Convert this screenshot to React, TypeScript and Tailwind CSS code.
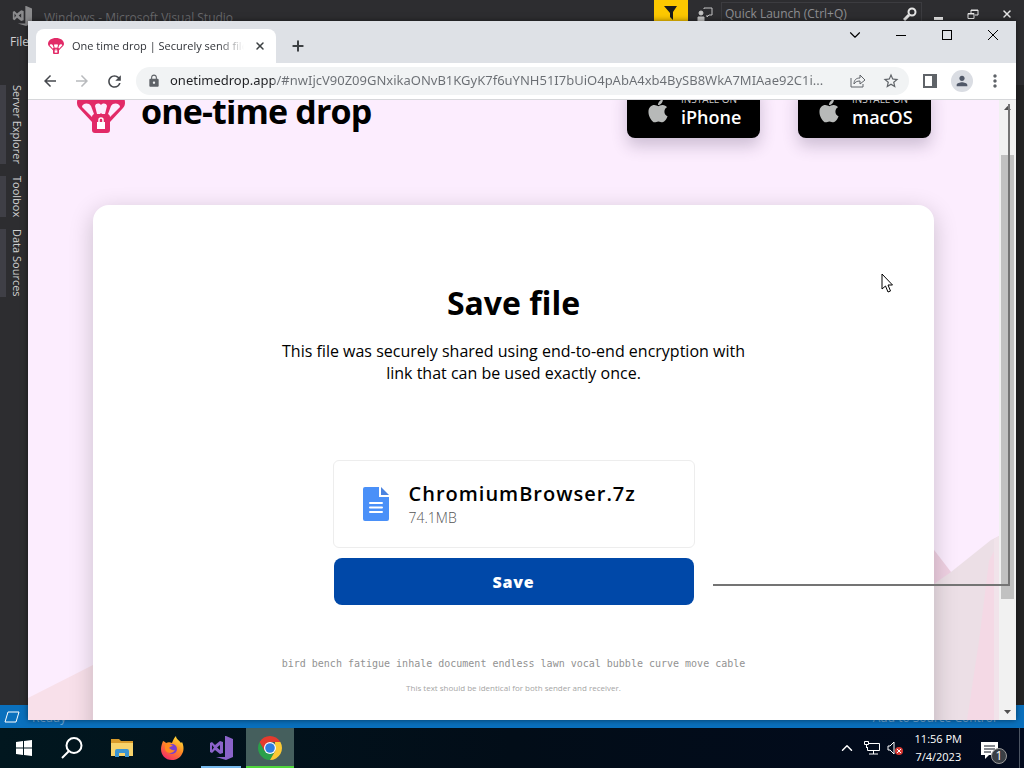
import { FaApple } from "react-icons/fa";
import {
  MdArrowBack,
  MdArrowForward,
  MdLock,
  MdMoreVert,
  MdPerson,
  MdRefresh,
  MdStarBorder,
} from "react-icons/md";
import { ChevronDown, ChevronUp, Plus, X } from "lucide-react";

const toolWindows = ["Server Explorer", "Toolbox", "Data Sources"];

const stores = [
  { id: "ios", name: "iPhone" },
  { id: "mac", name: "macOS" },
];

const file = { name: "ChromiumBrowser.7z", size: "74.1MB" };

const words =
  "bird bench fatigue inhale document endless lawn vocal bubble curve move cable";

const url =
  "onetimedrop.app/#nwIjcV90Z09GNxikaONvB1KGyK7f6uYNH51I7bUiO4pAbA4xb4BySB8WkA7MIAae92C1i...";

function DropLogo({ className }: { className: string }) {
  return (
    <svg viewBox="0 0 48 48" className={className} aria-hidden="true">
      <path
        fill="#e22a67"
        fillRule="evenodd"
        d="M0 18C0 7 11 0 24 0s24 7 24 18c0 2-1 4-2 5L33 37v8a3 3 0 0 1-3 3H18a3 3 0 0 1-3-3v-8L2 23c-1-1-2-3-2-5Z
           M5 22c0-4 7-5 9-1l3 8c-1 1-2 1-2 3Z M18 21c1-3 4-3 6-1 2-2 5-2 6 1l-2 8h-3l-1-1-1 1h-3Z M34 21c2-4 9-3 9 1L33 32c0-2-1-2-2-3Z"
      />
      <path d="M20 37h8v7h-8z" fill="#fff" />
      <path d="M22 37v-2a2 2 0 0 1 4 0v2" fill="none" stroke="#fff" strokeWidth="1.5" />
    </svg>
  );
}

function VisualStudioLogo({ className, color }: { className: string; color: string }) {
  return (
    <svg viewBox="0 0 24 24" className={className} fill={color} aria-hidden="true">
      <path d="M17 0l7 3v18l-7 3L7 21l9 0V0Z" />
      <path
        fillRule="evenodd"
        d="M1 7l2-1 3 3 5-4 3 1v11l-3 1-5-4-3 3-2-1ZM3 9v5l2-2.500ZM11 9l-3 2.500 3 2.500Z"
      />
    </svg>
  );
}

function VisualStudio() {
  return (
    <div className="flex h-full flex-col bg-[#2d2d30] text-[#d0d0d0]">
      <div className="flex h-7 items-center pl-3">
        <VisualStudioLogo className="mt-1 size-5" color="#8b8b8d" />
        <span className="ml-3 pt-2 text-[12px] leading-5 text-[#68686b]">
          Windows - Microsoft Visual Studio
        </span>
        <div className="ml-auto flex h-7 items-center">
          <button aria-label="Notifications" className="flex h-7 w-[34px] justify-center bg-[#fdc800] pt-1">
            <svg viewBox="0 0 14 16" className="h-4 w-[14px]">
              <path d="M0 2h13L9 8v8L6 13V9Z" fill="#1b1b1b" />
            </svg>
          </button>
          <button aria-label="Send feedback" className="flex w-[33px] justify-center">
            <svg viewBox="0 0 16 16" className="size-4" fill="none" stroke="#c4c4c4">
              <path d="M7 3V2h8v7h-3l-2 2V9" />
              <circle cx="4" cy="7" r="2" fill="#c4c4c4" />
              <path d="M1 15v-4h6v4Z" fill="#c4c4c4" />
            </svg>
          </button>
          <label className="flex h-6 w-[201px] items-center border border-[#3c3c40] pr-1 pl-[3px]">
            <input
              aria-label="Quick Launch"
              placeholder="Quick Launch (Ctrl+Q)"
              className="min-w-0 flex-1 bg-transparent text-[12px] outline-none placeholder:text-[#8f8f93]"
            />
            <svg viewBox="0 0 14 14" className="size-[14px]" fill="none" stroke="#e6e6e6" strokeWidth="2">
              <circle cx="9" cy="5" r="3.500" />
              <path d="M6 8l-5 5" strokeWidth="3" />
            </svg>
          </label>
          <div className="flex">
            <button aria-label="Minimize" className="flex w-[34px] justify-center">
              <svg viewBox="0 0 12 12" className="size-3">
                <path d="M1 9h9v3H1z" fill="#e6e6e6" />
              </svg>
            </button>
            <button aria-label="Restore" className="flex w-[34px] justify-center">
              <svg viewBox="0 0 12 12" className="size-3" fill="none" stroke="#e6e6e6">
                <path d="M1 5.500h6v5H1zM1 6h6M4 5V2h7v5H8M4 2.500h7" />
              </svg>
            </button>
            <button aria-label="Close" className="flex w-[34px] justify-center">
              <X className="size-3 text-[#e6e6e6]" strokeWidth={3} />
            </button>
          </div>
        </div>
      </div>
      <div className="flex h-[57px] items-start pl-[10px]">
        <button className="pt-1 text-[12px] leading-5">File</button>
      </div>
      <div className="flex flex-1 justify-between">
        <div className="flex flex-col gap-3">
          {toolWindows.map((name) => (
            <button
              key={name}
              className="border-l-[6px] border-[#3f3f46] pl-[3px] text-[11px] leading-4 [writing-mode:vertical-rl]"
            >
              {name}
            </button>
          ))}
        </div>
        <div className="w-2 bg-[#232324]" />
      </div>
      <div className="flex h-[23px] items-center gap-3 bg-[#0a70bd] pr-7 pl-1 text-[12px] text-[#6fa9d8]">
        <svg viewBox="0 0 16 12" className="h-3 w-4" fill="none" stroke="#fff">
          <path d="M4 1h11l-3 10H1Z" />
        </svg>
        <span className="pt-[2px]">Ready</span>
        <span className="ml-auto pt-[2px]">Add to Source Control</span>
      </div>
    </div>
  );
}

function TabStrip() {
  return (
    <div className="flex h-[42px] items-end bg-[#dee1e6] pl-2">
      <div className="flex h-[34px] w-60 items-center rounded-t-lg bg-white pr-2 pl-3">
        <DropLogo className="size-4 shrink-0" />
        <span className="ml-2 flex-1 overflow-hidden text-[11px] whitespace-nowrap text-[#303338] [mask-image:linear-gradient(to_right,#000_85%,transparent)]">
          One time drop | Securely send files
        </span>
        <button aria-label="Close tab" className="ml-2 flex size-4 items-center justify-center">
          <X className="size-3 text-[#3c4043]" strokeWidth={3} />
        </button>
      </div>
      <button aria-label="New tab" className="flex h-[34px] w-11 items-center justify-center">
        <Plus className="size-4 text-[#3c4043]" strokeWidth={3} />
      </button>
      <div className="ml-auto flex self-start text-black">
        <button aria-label="Search tabs" className="flex h-7 w-[46px] items-center justify-center">
          <ChevronDown className="size-[18px]" strokeWidth={1.5} />
        </button>
        <button aria-label="Minimize" className="flex h-7 w-[46px] items-center justify-center">
          <svg viewBox="0 0 10 10" className="size-[10px]">
            <path d="M0 5h10v1H0z" />
          </svg>
        </button>
        <button aria-label="Maximize" className="flex h-7 w-[46px] items-center justify-center">
          <span className="size-[10px] border border-black" />
        </button>
        <button aria-label="Close" className="flex h-7 w-[46px] items-center justify-center">
          <svg viewBox="0 0 10 10" className="size-[10px]" fill="none" stroke="#000">
            <path d="M0 0l10 10M10 0L0 10" />
          </svg>
        </button>
      </div>
    </div>
  );
}

function Toolbar() {
  return (
    <div className="flex h-[37px] items-center border-b border-[#d6d7da] bg-white pr-[11px] pl-[13px] text-[#5f6368]">
      <div className="flex gap-[14px]">
        <button aria-label="Back" className="text-[#45484d]">
          <MdArrowBack className="size-[18px]" />
        </button>
        <button aria-label="Forward" className="text-[#b8babd]">
          <MdArrowForward className="size-[18px]" />
        </button>
        <button aria-label="Reload" className="text-[#45484d]">
          <MdRefresh className="size-[19px]" />
        </button>
      </div>
      <label className="ml-3 flex h-7 flex-1 items-center rounded-full bg-[#f1f3f4] pr-[9px] pl-[11px]">
        <MdLock className="size-[14px] shrink-0" />
        <input
          aria-label="Address"
          defaultValue={url}
          className="ml-[9px] min-w-0 flex-1 bg-[linear-gradient(to_right,#202124_104px,#6a6e73_104px)] bg-clip-text font-['Noto_Sans',sans-serif] text-[13px] text-transparent outline-none"
        />
        <button aria-label="Share" className="ml-3">
          <svg viewBox="0 0 16 16" className="size-4" fill="none" stroke="currentColor">
            <path d="M1 5v9h12v-3M4 11c0-4 2-6 6-6V2l5 5-5 4V8c-3 0-5 1-6 3Z" />
          </svg>
        </button>
        <button aria-label="Bookmark" className="ml-4">
          <MdStarBorder className="size-[18px]" />
        </button>
      </label>
      <button aria-label="Side panel" className="ml-[14px]">
        <svg viewBox="0 0 14 14" className="size-[14px]" fill="none">
          <path d="M1 1h12v12H1z" stroke="currentColor" strokeWidth="2" />
          <path d="M9 1h4v12H9z" fill="currentColor" />
        </svg>
      </button>
      <button
        aria-label="Profile"
        className="ml-[14px] flex size-[22px] items-center justify-center rounded-full bg-[#dadde3]"
      >
        <MdPerson className="size-4 text-[#505868]" />
      </button>
      <button aria-label="Menu" className="ml-3">
        <MdMoreVert className="size-5" />
      </button>
    </div>
  );
}

function Page() {
  return (
    <div className="relative min-w-0 flex-1 overflow-hidden bg-[#fcedfe] font-['Open_Sans',sans-serif] text-black">
      <svg
        viewBox="0 0 971 184"
        preserveAspectRatio="none"
        className="absolute bottom-0 left-0 h-[184px] w-full"
        aria-hidden="true"
      >
        <path d="M0 162l65-33 100-50v105H0Z" fill="#f8e0ea" />
        <path d="M880-20l43 56-30 148h-60Z" fill="#efd0e2" />
        <path d="M880 66l43-30 40-32 8-4v184h-91Z" fill="#ecdfe6" />
        <path d="M971 5l-10 20-10 80-12 79h32Z" fill="#f4d9e5" />
        <path d="M966 3l5-3v184h-5Z" fill="#f1e3ea" />
      </svg>
      <div className="relative -mt-4">
        <header className="flex h-[54px] items-start pr-[68px] pl-[49px]">
          <DropLogo className="mt-px size-12" />
          <span className="ml-4 text-[34px] leading-[54px] font-bold tracking-tight">one-time drop</span>
          <div className="ml-auto flex gap-[38px]">
            {stores.map((store) => (
              <a
                key={store.id}
                href={`#${store.id}`}
                className="flex h-[54px] w-[133px] items-center gap-3 rounded-lg bg-black pl-5 text-white shadow-[0_8px_16px_rgba(60,40,80,0.24)]"
              >
                <FaApple className="-mx-[2px] size-[26px] shrink-0 text-[#b7b9b8]" />
                <span className="flex flex-col">
                  <span className="text-[10px] leading-3 text-[#c8c8c8]">INSTALL ON</span>
                  <span className="text-[18px] leading-6 font-semibold">{store.name}</span>
                </span>
              </a>
            ))}
          </div>
        </header>
        <main className="mx-[65px] mt-[67px] flex flex-col items-center rounded-2xl bg-white px-8 pt-[76px] pb-20 shadow-[0_6px_24px_rgba(0,0,0,0.2)]">
          <h1 className="text-[32px] leading-[44px] font-bold">Save file</h1>
          <p className="mt-[15px] max-w-[480px] text-center text-[16px] leading-[22px]">
            This file was securely shared using end-to-end encryption with link that can be used exactly once.
          </p>
          <div className="mt-[76px] flex h-[88px] w-[362px] items-center rounded-md border border-[#ededed] pl-[29px]">
            <svg viewBox="0 0 26 34" className="h-[34px] w-[26px]" aria-hidden="true">
              <path d="M2 0h14v10h10v22a2 2 0 0 1-2 2H2a2 2 0 0 1-2-2V2a2 2 0 0 1 2-2Z" fill="#4a90f8" />
              <path d="M18 0l8 8h-8Z" fill="#4a83e0" />
              <path d="M7 16h12M7 20.500h12M7 25h12" stroke="#fff" strokeWidth="2" strokeLinecap="round" />
            </svg>
            <div className="ml-5">
              <div className="text-[20px] leading-7 font-semibold tracking-wider">{file.name}</div>
              <div className="text-[14px] leading-5 font-light text-[#555]">{file.size}</div>
            </div>
          </div>
          <button className="mt-[10px] h-[47px] w-[360px] rounded-lg bg-[#0048a8] text-[16px] font-extrabold tracking-wider text-white">
            Save
          </button>
          <p className="mt-[51px] font-['DejaVu_Sans_Mono',monospace] text-[10px] leading-4 text-[#929292]">{words}</p>
          <p className="mt-2 text-[8px] leading-4 text-[#a5a5a5]">
            This text should be identical for both sender and receiver.
          </p>
        </main>
      </div>
    </div>
  );
}

function Scrollbar() {
  return (
    <div className="flex w-[17px] flex-col items-center bg-[#f1f1f1] py-[6px]" aria-hidden="true">
      <svg viewBox="0 0 7 4" className="h-1 w-[7px]">
        <path d="M0 4l3.500-4L7 4Z" fill="#505050" />
      </svg>
      <div className="mt-[45px] h-[444px] w-[13px] bg-[#c1c1c1]" />
      <svg viewBox="0 0 7 4" className="mt-auto h-1 w-[7px]">
        <path d="M0 0l3.500 4L7 0Z" fill="#505050" />
      </svg>
    </div>
  );
}

function Chrome() {
  return (
    <div className="absolute top-[21px] right-2 bottom-2 left-7 flex flex-col overflow-hidden bg-white shadow-[0_0_6px_rgba(0,0,0,0.5)]">
      <TabStrip />
      <Toolbar />
      <div className="relative flex min-h-0 flex-1">
        <Page />
        <Scrollbar />
        {/* leftover edge of a window dragged over the page */}
        <div className="pointer-events-none absolute top-1 right-[6px] h-[482px] w-[2px] bg-[#747474]" />
        <div className="pointer-events-none absolute top-[484px] right-[6px] h-[2px] w-[297px] bg-[#747474]" />
      </div>
    </div>
  );
}

function ChromeLogo() {
  return (
    <svg viewBox="0 0 24 24" className="size-6">
      <path d="M1.610 6l5.200 9L12 18l5-3-5 9A12 12 0 0 1 1.610 6Z" fill="#2aa04a" />
      <path d="M12 24l5.200-9L17 6h5.390A12 12 0 0 1 12 24Z" fill="#fcc934" />
      <path d="M1.610 6A12 12 0 0 1 22.390 6H12L6.800 15Z" fill="#e33b2e" />
      <circle cx="12" cy="12" r="6" fill="#fff" />
      <circle cx="12" cy="12" r="4.800" fill="#2f7de1" />
    </svg>
  );
}

function FirefoxLogo() {
  return (
    <svg viewBox="0 0 24 24" className="size-6">
      <defs>
        <linearGradient id="flame" x1="0.8" y1="0" x2="0.2" y2="1">
          <stop offset="0" stopColor="#ffe53d" />
          <stop offset="0.45" stopColor="#ff8b22" />
          <stop offset="1" stopColor="#f5246b" />
        </linearGradient>
      </defs>
      <path
        d="M3 5c1 0 2 1 3 2 2-1 4-1 6 0 1-3 2-5 4-7 0 3 3 4 5 7l1-1c2 4 2 9 0 12-2 4-6 6-10 6C5 24 1 19 1 13c0-3 1-5 2-8Z"
        fill="url(#flame)"
      />
      <circle cx="12" cy="13" r="5" fill="#7a3fcf" />
      <path d="M5 9c3-2 6-1 8 1-2 0-3 1-4 2 2 1 3 3 6 2-2 4-9 4-10-1Z" fill="#ff8a1e" />
    </svg>
  );
}

function Taskbar() {
  return (
    <div className="flex h-10 shrink-0 bg-[linear-gradient(to_right,#01171f,#020d18_50%,#020a1d)] text-white">
      <button aria-label="Start" className="flex w-12 items-center justify-center">
        <svg viewBox="0 0 16 16" className="size-4" fill="#fff">
          <path d="M0 2l7-1v6.500H0ZM8 1l8-1v7.500H8ZM0 8.500h7V15l-7-1ZM8 8.500h8V16l-8-1Z" />
        </svg>
      </button>
      <button aria-label="Search" className="flex w-12 items-center justify-center">
        <svg viewBox="0 0 22 22" className="size-[22px]" fill="none" stroke="#fff" strokeWidth="2">
          <circle cx="13" cy="8.500" r="7.500" />
          <path d="M8 14l-7 7" />
        </svg>
      </button>
      <button aria-label="File Explorer" className="flex w-[52px] items-center justify-center">
        <svg viewBox="0 0 22 20" className="h-5 w-[22px]">
          <path d="M0 1h8l2 2h12v4H0Z" fill="#d99b2b" />
          <path d="M0 5h22v13H0Z" fill="#f8d36b" />
          <path d="M4 19v-6a2 2 0 0 1 2-2h10a2 2 0 0 1 2 2v6h-4v-4H8v4Z" fill="#3b94d1" />
        </svg>
      </button>
      <button aria-label="Firefox" className="flex w-12 items-center justify-center">
        <FirefoxLogo />
      </button>
      <button aria-label="Visual Studio" className="flex w-[50px] flex-col items-center px-[5px] pt-2">
        <VisualStudioLogo className="size-6" color="#8a63c9" />
        <span className="mt-auto h-[2px] w-full bg-[#76b9ed]" />
      </button>
      <button aria-label="Google Chrome" className="flex w-12 flex-col items-center bg-[#455f5d] pt-2">
        <ChromeLogo />
        <span className="mt-auto h-[2px] w-full bg-[#4fd63c]" />
      </button>
      <div className="ml-auto flex items-center">
        <button aria-label="Show hidden icons" className="mr-2">
          <ChevronUp className="size-[18px]" strokeWidth={2} />
        </button>
        <button aria-label="Network" className="mr-[7px]">
          <svg viewBox="0 0 16 14" className="h-[14px] w-4" fill="none" stroke="#fff">
            <path d="M4 2.500h11.500v7H3.500V6M9.500 10v3M5 13h9M.5.500h4v3h-4zM2.500 4v3" />
          </svg>
        </button>
        <button aria-label="Volume muted" className="mr-3">
          <svg viewBox="0 0 16 14" className="h-[14px] w-4" fill="none">
            <path d="M1 5v4h2l4 4V1L3 5Z" stroke="#fff" />
            <circle cx="12" cy="10" r="4" fill="#d93a34" />
            <path d="M10 8l4 4M14 8l-4 4" stroke="#fff" />
          </svg>
        </button>
        <button className="text-center text-[11px] leading-[18px]">
          11:56 PM
          <br />
          7/4/2023
        </button>
        <button aria-label="1 new notification" className="relative mr-3 ml-[17px] h-8 w-7">
          <svg viewBox="0 0 18 17" className="mt-1 ml-[2px] h-[17px] w-[18px]">
            <path d="M0 0h17v13H8l-4 4v-4H0Z" fill="#fff" />
            <path d="M3 4h11M3 7h11M3 10h7" stroke="#0b1220" />
          </svg>
          <span className="absolute right-0 bottom-0 flex size-4 items-center justify-center rounded-full border border-[#9a9a9a] bg-[#3a3f45] text-[12px] leading-4">
            1
          </span>
        </button>
        <div className="mr-1 h-10 w-px bg-[#4c5563]" />
      </div>
    </div>
  );
}

export default function App() {
  return (
    <div className="relative flex h-screen flex-col overflow-hidden bg-[#2d2d30] font-['Open_Sans','Noto_Sans',sans-serif]">
      <div className="relative min-h-0 flex-1">
        <VisualStudio />
        <Chrome />
      </div>
      <Taskbar />
      <svg viewBox="0 0 12 20" className="pointer-events-none absolute top-[273px] left-[881px] h-5 w-3">
        <path d="M1 1v15l3.500-3 2.500 6 2.500-1L7 12h4.500Z" fill="#fff" stroke="#000" />
      </svg>
    </div>
  );
}
